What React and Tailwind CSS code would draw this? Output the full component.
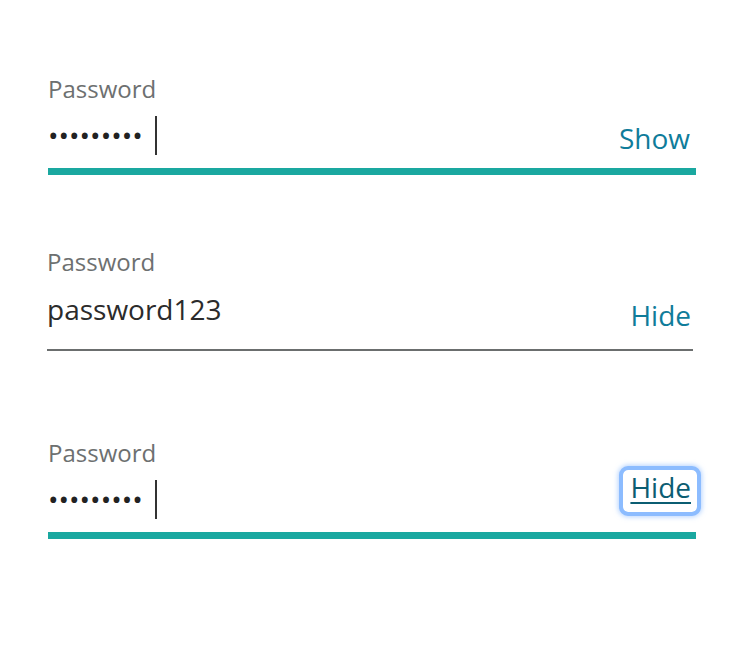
import React from 'react'

function Masked() {
  return (
    <div className="flex items-center h-[39px]">
      <span className="text-[28px] leading-[39px] text-[#222]">{'\u2022'.repeat(9)}</span>
      <span className="ml-[12px] w-[2px] h-[39px] bg-[#333]" />
    </div>
  )
}

export default function App() {
  return (
    <div className="w-[740px] h-[646px] bg-white font-['Open_Sans',sans-serif]">
      <div className="flex flex-col pt-[74px]">
        {/* Field 1: masked, active */}
        <div className="ml-[48px] w-[648px]">
          <div className="text-[24px] leading-[30px] text-[#6d7070]">Password</div>
          <div className="flex items-start justify-between pt-[12px]">
            <Masked />
            <button className="mt-[5px] pr-[6px] text-[28px] leading-[34px] text-[#0f7c9a]">Show</button>
          </div>
          <div className="mt-[13px] h-[7px] bg-[#1aa8a0]" />
        </div>

        {/* Field 2: revealed, idle */}
        <div className="ml-[47px] w-[646px] mt-[72px]">
          <div className="text-[24px] leading-[30px] text-[#6d7070]">Password</div>
          <div className="flex items-start justify-between pt-[12px]">
            <span className="text-[28px] leading-[40px] text-[#2b2b2b]">password123</span>
            <button className="mt-[9px] pr-[2px] text-[28px] leading-[34px] text-[#0f7c9a]">Hide</button>
          </div>
          <div className="mt-[17px] h-[2px] bg-[#6b6e6e]" />
        </div>

        {/* Field 3: masked, focused toggle */}
        <div className="ml-[48px] w-[648px] mt-[87px]">
          <div className="text-[24px] leading-[30px] text-[#6d7070]">Password</div>
          <div className="flex items-start justify-between pt-[12px]">
            <Masked />
            <button className="-mt-[10px] -mr-[1px] pl-[7px] pr-[6px] pb-[8px] rounded-[5px] text-[28px] leading-[34px] text-[#0b5d72] underline underline-offset-[4px] decoration-2 outline-[4px] outline-solid outline-[#8cbcff] shadow-[0_0_5px_5px_rgba(120,175,255,0.55)]">
              Hide
            </button>
          </div>
          <div className="mt-[13px] h-[7px] bg-[#1aa8a0]" />
        </div>
      </div>
    </div>
  )
}
